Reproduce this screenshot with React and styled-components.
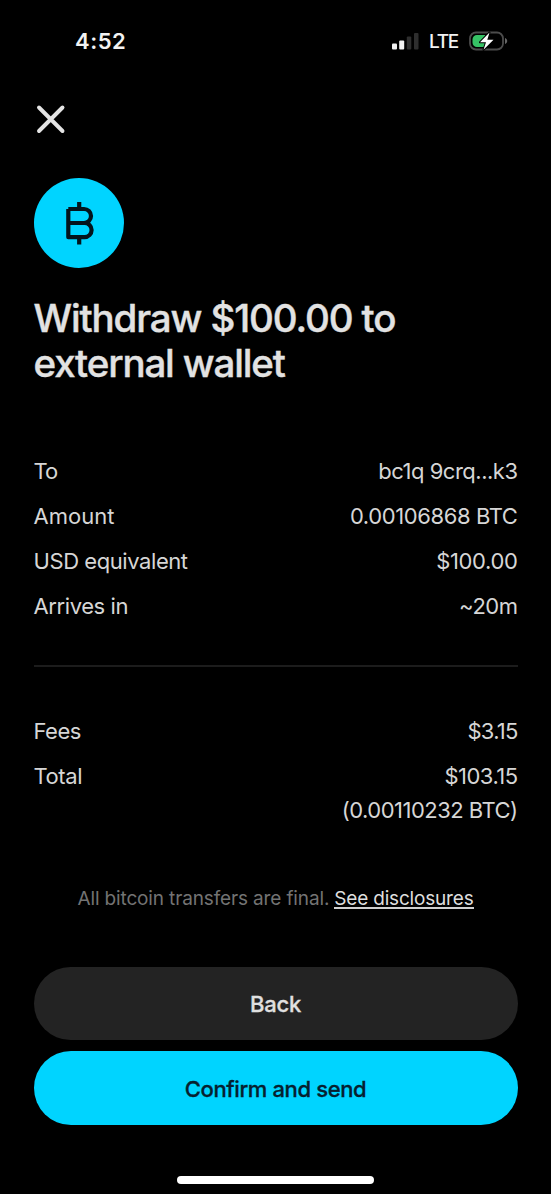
import styled, { createGlobalStyle } from "styled-components";

const GlobalStyle = createGlobalStyle`
  * {
    box-sizing: border-box;
  }

  body {
    margin: 0;
    background-color: #000;
  }
`;

const Screen = styled.div`
  display: flex;
  flex-direction: column;
  width: 551px;
  height: 1194px;
  padding: 0 33.5px;
  overflow: hidden;
  background-color: #000;
  color: #d6d6d6;
  font-family: Inter, "Liberation Sans", sans-serif;
`;

const StatusBar = styled.div`
  display: flex;
  align-items: center;
  justify-content: space-between;
  height: 26px;
  margin-top: 28px;
  padding: 0 9.5px 0 41.5px;
  color: #f2f2f2;
`;

const Time = styled.div`
  font-size: 22px;
  font-weight: 600;
  line-height: 26px;
  letter-spacing: ${(props) => props.$track}px;
`;

const StatusIcons = styled.div`
  display: flex;
  align-items: center;
`;

const Network = styled.span`
  margin: 2px 11px 0 10.5px;
  font-size: 19px;
  font-weight: 500;
  line-height: 26px;
  letter-spacing: ${(props) => props.$track}px;
`;

const CloseButton = styled.button`
  display: flex;
  width: 34px;
  height: 34px;
  margin: 48px 0 0;
  padding: 0;
  border: none;
  background: none;
  color: #e4e4e4;
`;

const Coin = styled.div`
  display: flex;
  width: 90px;
  height: 90px;
  margin-top: 42px;
  border-radius: 50%;
  background-color: #00d4ff;
`;

const Title = styled.h1`
  margin: 27px 0 0;
  padding-top: 0.5px;
  color: #e2e2e2;
  font-size: 38.5px;
  font-weight: 500;
  line-height: 45px;
  -webkit-text-stroke: 0.4px currentColor;
`;

const Line = styled.span`
  display: block;
  white-space: nowrap;
  letter-spacing: ${(props) => props.$track || 0}px;
`;

const List = styled.div`
  display: flex;
  flex-direction: column;
  gap: 11px;
  margin-top: ${(props) => props.$top}px;
`;

const Row = styled.div`
  display: flex;
  justify-content: space-between;
  font-size: 22px;
  line-height: 34px;
`;

const Value = styled.div`
  text-align: right;
`;

const Divider = styled.div`
  height: 2px;
  margin-top: 42px;
  background-color: #1c1c1c;
`;

const Note = styled.div`
  display: flex;
  justify-content: center;
  gap: 5px;
  margin-top: 59px;
  color: #737373;
  font-size: 19px;
  line-height: 26px;
`;

const NoteLink = styled.a`
  height: 23px;
  border-bottom: 2px solid #d0d0d0;
  color: #dedede;
`;

const Actions = styled.div`
  display: flex;
  flex-direction: column;
  gap: 11px;
  margin-top: 55px;
`;

const Button = styled.button`
  height: 73.5px;
  padding: 2px 0 0;
  border: none;
  border-radius: 37px;
  background-color: ${(props) => (props.$primary ? "#00d4ff" : "#232323")};
  color: ${(props) => (props.$primary ? "#06202f" : "#e0e0e0")};
  font-family: inherit;
  font-size: 22px;
  font-weight: 500;
  -webkit-text-stroke: 0.3px currentColor;
`;

const HomeBar = styled.div`
  width: 197px;
  height: 8px;
  margin: 51px auto 0;
  border-radius: 4px;
  background-color: #fff;
`;

const details = [
  { label: "To", track: -1, value: "bc1q 9crq...k3", valueTrack: -0.5 },
  { label: "Amount", track: 0, value: "0.00106868 BTC", valueTrack: -0.4 },
  { label: "USD equivalent", track: -0.43, value: "$100.00", valueTrack: -0.35 },
  { label: "Arrives in", track: -0.4, value: "~20m", valueTrack: -0.5 },
];

function SignalIcon() {
  return (
    <svg width="27" height="18" viewBox="0 0 27 18">
      <rect x="0" y="11.5" width="5" height="6" rx="1" fill="#f2f2f2" />
      <rect x="7.2" y="8.5" width="5" height="9" rx="1" fill="#f2f2f2" />
      <rect x="14.8" y="4.5" width="4.5" height="13" rx="1" fill="#2e2e2e" />
      <rect x="22" y="1" width="4.5" height="16.5" rx="1" fill="#2e2e2e" />
    </svg>
  );
}

function BatteryIcon() {
  return (
    <svg width="39" height="20" viewBox="0 0 39 20">
      <rect x="1" y="1.5" width="33" height="17" rx="6" fill="none" stroke="#4c4c4c" strokeWidth="1.8" />
      <path d="M36 7v6c1.4-.5 2.2-1.7 2.2-3S37.4 7.5 36 7z" fill="#666" />
      <path d="M8 4H16v12H8a4.5 4.5 0 0 1-4.5-4.5V8.5A4.5 4.5 0 0 1 8 4z" fill="#36c265" />
      <path
        d="M20.5 1.5L11 11.2h6L14.5 18.8 24.5 8.8h-6.2z"
        fill="#fff"
        stroke="#000"
        strokeWidth="2"
        paintOrder="stroke"
        strokeLinejoin="round"
      />
    </svg>
  );
}

function CloseIcon() {
  return (
    <svg width="34" height="34" viewBox="0 0 34 34">
      <path d="M5 5.5L28.5 29M28.5 5.5L5 29" stroke="currentColor" strokeWidth="3.9" strokeLinecap="round" />
    </svg>
  );
}

function BitcoinIcon() {
  return (
    <svg width="90" height="90" viewBox="0 0 90 90" fill="none" stroke="#03141c" strokeWidth="4.2" strokeLinejoin="round">
      <path d="M34.3 31H50a7 7 0 0 1 0 14H34.3M50.5 45a7 7 0 0 1 0 14.2H34.3V31M45.2 24v7M45.2 59.2V66.5" />
    </svg>
  );
}

function App() {
  return (
    <Screen>
      <GlobalStyle />
      <StatusBar>
        <Time $track={0.5}>4:52</Time>
        <StatusIcons>
          <SignalIcon />
          <Network $track={-1.3}>LTE</Network>
          <BatteryIcon />
        </StatusIcons>
      </StatusBar>

      <CloseButton aria-label="Close">
        <CloseIcon />
      </CloseButton>

      <Coin>
        <BitcoinIcon />
      </Coin>

      <Title>
        <Line $track={-1.13}>Withdraw $100.00 to</Line>
        <Line $track={-1.15}>external wallet</Line>
      </Title>

      <List $top={68}>
        {details.map((item) => (
          <Row key={item.label}>
            <Line $track={item.track}>{item.label}</Line>
            <Line $track={item.valueTrack}>{item.value}</Line>
          </Row>
        ))}
      </List>

      <Divider />

      <List $top={47}>
        <Row>
          <Line $track={-0.5}>Fees</Line>
          <Line $track={-0.8}>$3.15</Line>
        </Row>
        <Row>
          <Line $track={-0.4}>Total</Line>
          <Value>
            <Line $track={-0.55}>$103.15</Line>
            <Line $track={-0.52}>(0.00110232 BTC)</Line>
          </Value>
        </Row>
      </List>

      <Note>
        <Line $track={-0.14}>All bitcoin transfers are final.</Line>
        <NoteLink>
          <Line $track={-0.18}>See disclosures</Line>
        </NoteLink>
      </Note>

      <Actions>
        <Button>
          <Line $track={-0.2}>Back</Line>
        </Button>
        <Button $primary>
          <Line $track={-0.38}>Confirm and send</Line>
        </Button>
      </Actions>

      <HomeBar />
    </Screen>
  );
}

export default App;
